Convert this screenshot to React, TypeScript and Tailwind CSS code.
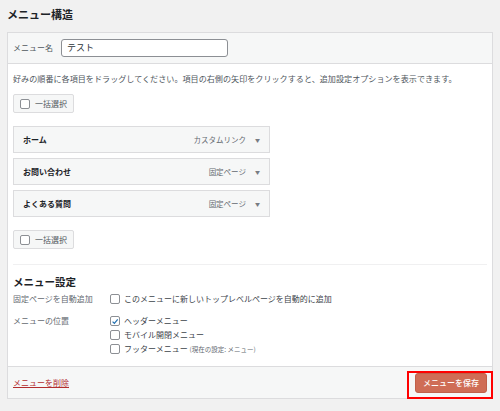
import React from "react";

function Box({ checked = false }: { checked?: boolean }) {
  return (
    <span className="flex h-[10px] w-[10px] shrink-0 items-center justify-center rounded-[2px] border border-[#8c8f94] bg-white">
      {checked && (
        <svg viewBox="0 0 10 10" className="h-[9px] w-[9px]">
          <path d="M2 5.2 L4.2 7.4 L8.4 2.2" fill="none" stroke="#2271b1" strokeWidth="1.5" />
        </svg>
      )}
    </span>
  );
}

function BulkButton() {
  return (
    <div className="flex h-[19px] w-[61px] items-center gap-[5px] rounded-[2px] border border-[#dcdcde] bg-[#f6f7f7] pl-[6px] text-[8px] text-[#50575e]">
      <Box />
      <span>一括選択</span>
    </div>
  );
}

const items = [
  { title: "ホーム", kind: "カスタムリンク" },
  { title: "お問い合わせ", kind: "固定ページ" },
  { title: "よくある質問", kind: "固定ページ" },
];

export default function App() {
  return (
    <div
      className="h-[411px] w-[500px] bg-[#f1f1f1] text-[#3c434a]"
      style={{ fontFamily: '"Noto Sans CJK JP", "Noto Sans", sans-serif' }}
    >
      <h2 className="h-[32px] pl-[7px] pt-[6px] text-[11px] font-bold leading-[16px] text-[#1d2327]">メニュー構造</h2>
      <div className="mx-[7px] border border-[#dcdcde] bg-white">
        <div className="flex h-[31px] items-center gap-[8px] border-b border-[#dcdcde] bg-[#f6f7f7] pl-[5px]">
          <span className="text-[8px] text-[#50575e]">メニュー名</span>
          <div className="flex h-[18px] w-[167px] items-center rounded-[3px] border border-[#8c8f94] bg-white pl-[5px] text-[9px] text-[#2c3338]">
            テスト
          </div>
        </div>
        <div className="px-[5px]">
          <p className="pt-[9px] text-[8.1px] leading-[12px] text-[#50575e]">
            好みの順番に各項目をドラッグしてください。項目の右側の矢印をクリックすると、追加設定オプションを表示できます。
          </p>
          <div className="mt-[9px]">
            <BulkButton />
          </div>
          <div className="mt-[13px] flex w-[257px] flex-col gap-[5px]">
            {items.map((it) => (
              <div
                key={it.title}
                className="flex h-[27px] items-center border border-[#dcdcde] bg-[#f6f7f7] pl-[9px] pr-[9px]"
              >
                <span className="text-[8px] font-bold text-[#1d2327]">{it.title}</span>
                <span className="ml-auto text-[7.5px] text-[#646970]">{it.kind}</span>
                <span className="ml-[9px] text-[5px] text-[#787c82]">▼</span>
              </div>
            ))}
          </div>
          <div className="mt-[13px]">
            <BulkButton />
          </div>
          <div className="mt-[15px] border-t border-[#f0f0f1]" />
          <h3 className="pt-[9px] text-[10.5px] font-bold leading-[16px] text-[#1d2327]">メニュー設定</h3>
          <div className="mt-[3px] flex items-center text-[8px] leading-[12px]">
            <span className="w-[97px] text-[#646970]">固定ページを自動追加</span>
            <Box />
            <span className="ml-[4px] text-[#3c434a]">このメニューに新しいトップレベルページを自動的に追加</span>
          </div>
          <div className="mt-[9px] flex text-[8px] leading-[14px]">
            <span className="w-[97px] text-[#646970]">メニューの位置</span>
            <div className="flex flex-col">
              <label className="flex items-center gap-[4px]">
                <Box checked />
                <span>ヘッダーメニュー</span>
              </label>
              <label className="flex items-center gap-[4px]">
                <Box />
                <span>モバイル開閉メニュー</span>
              </label>
              <label className="flex items-center gap-[4px]">
                <Box />
                <span>
                  フッターメニュー <span className="text-[6.5px] text-[#646970]">(現在の設定: メニュー)</span>
                </span>
              </label>
            </div>
          </div>
          <div className="h-[10px]" />
        </div>
        <div className="relative flex h-[32px] items-center border-t border-[#dcdcde] bg-[#f6f7f7] pl-[5px] pr-[5px]">
          <span className="text-[8px] text-[#b32d2e] underline">メニューを削除</span>
          <button className="ml-auto mt-[1px] flex h-[20px] w-[72px] items-center justify-center rounded-[3px] border border-[#c0604a] bg-[#cf6d56] text-[8px] font-medium text-white">
            メニューを保存
          </button>
          <div className="pointer-events-none absolute right-[-1px] top-[4px] h-[28px] w-[86px] border-2 border-[#ff0000]" />
        </div>
      </div>
    </div>
  );
}
